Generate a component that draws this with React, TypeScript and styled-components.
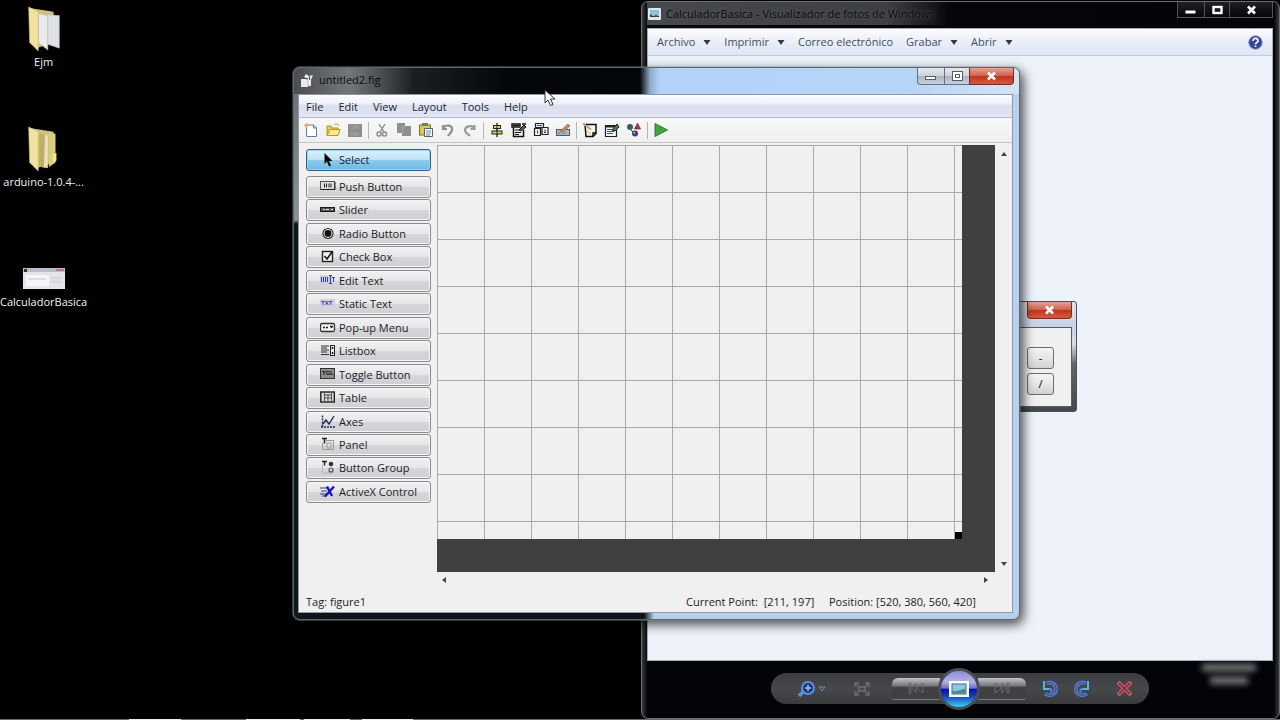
import React from 'react';
import styled, { createGlobalStyle, css } from 'styled-components';

const Global = createGlobalStyle`
  * { box-sizing: border-box; }
  html, body { margin: 0; background: #000; }
  body, button { font-family: "Open Sans", "Noto Sans", sans-serif; font-size: 11px; line-height: 16px; }
  button { border: 0; padding: 0; margin: 0; background: none; color: inherit; }
  svg { display: block; flex: none; }
`;

/* ---------- desktop ---------- */
const Desktop = styled.main`
  position: relative;
  min-height: 100vh;
  overflow: hidden;
  background: #000;
`;
const Shortcuts = styled.nav`
  display: grid;
  grid-auto-rows: 120px;
  width: 86px;
`;
const Shortcut = styled.a`
  display: flex;
  flex-direction: column;
  align-items: center;
  justify-content: flex-end;
  height: 70px;
  gap: 2px;
  color: #f2f2f2;
  text-decoration: none;
  white-space: nowrap;
`;
const Taskbar = styled.footer`
  position: absolute;
  left: 0;
  right: 0;
  bottom: 0;
  height: 1px;
  display: flex;
  gap: 4px;
  padding-left: 129px;
  background: #6a6a6a;
`;
const TaskItem = styled.span<{ $w: number; $gap?: number }>`
  width: ${p => p.$w}px;
  margin-left: ${p => p.$gap || 0}px;
  background: #eee;
`;

/* ---------- photo viewer ---------- */
const Viewer = styled.section`
  position: absolute;
  left: calc(50% + 1px);
  right: 0;
  top: 1px;
  bottom: 1px;
  display: flex;
  flex-direction: column;
  padding: 0 6px 0 5px;
  border: 1px solid #6d6f72;
  border-radius: 7px;
  background: linear-gradient(90deg, #3a3b3d 0, #08090c 5px, #030408 calc(100% - 5px), #3a3b3d 100%);
`;
const ViewerTitle = styled.header`
  display: flex;
  justify-content: space-between;
  align-items: flex-start;
  height: 26px;
  color: #08090b;
`;
const ViewerName = styled.h2`
  display: flex;
  align-items: center;
  gap: 5px;
  height: 23px;
  margin: 0;
  padding: 0 12px 0 1px;
  font-size: 11px;
  font-weight: 400;
  white-space: nowrap;
  background: linear-gradient(90deg, #47494c, #3d3f42 80%, #15171a 96%, transparent);
  text-shadow: 0 0 4px #66686b;
`;
const Caption = styled.div`
  display: flex;
  flex: none;
`;
const ViewerCaptionButton = styled.button<{ $w: number }>`
  width: ${p => p.$w}px;
  height: 16px;
  display: grid;
  place-items: center;
  border: 1px solid #54565a;
  border-top: 0;
  margin-left: -1px;
  background: linear-gradient(#1e2023, #050608);
`;
const ViewerClient = styled.div`
  flex: 1;
  display: flex;
  flex-direction: column;
  border: 1px solid #a9acb2;
  background: #eef2fb;
`;
const ViewerMenu = styled.nav`
  display: flex;
  align-items: center;
  gap: 13px;
  height: 27px;
  padding: 0 9px;
  color: #434d5e;
  border-bottom: 1px solid #c3ccda;
  background: linear-gradient(#fbfcfe, #e9eef8 50%, #dde6f2);
`;
const ViewerMenuItem = styled.button`
  display: flex;
  align-items: center;
  gap: 8px;
  white-space: nowrap;
`;
const Help = styled.button`
  margin-left: auto;
`;
const ControlArea = styled.div`
  display: flex;
  justify-content: center;
  align-items: center;
  height: 57px;
  padding-bottom: 2px;
  background: #030408;
`;
const ControlPill = styled.div`
  display: flex;
  align-items: center;
  width: 378px;
  height: 31px;
  padding-left: 22px;
  border-radius: 16px;
  background: linear-gradient(#3c3d40, #47484b 50%, #3a3b3d);
`;
const PillButton = styled.button<{ $w: number }>`
  flex: none;
  width: ${p => p.$w}px;
  height: 24px;
  display: grid;
  place-items: center;
`;
const RotateGroup = styled.div`
  display: flex;
  margin-left: 8px;
`;
const StepButton = styled.button<{ $side: 'l' | 'r' }>`
  flex: none;
  width: 48px;
  height: 22px;
  display: grid;
  place-items: center;
  border-bottom: 1px solid #77797c;
  border-radius: ${p => (p.$side === 'l' ? '6px 0 0 2px' : '0 6px 2px 0')};
  background: linear-gradient(#c4c5c8, #77797c 36%, #3f4043 46%, #3f4043);
`;
const Play = styled.button`
  flex: none;
  position: relative;
  width: 42px;
  height: 42px;
  margin: 0 -2px;
  display: grid;
  place-items: center;
  border-radius: 50%;
  border: 3px solid #4b4e58;
  background: linear-gradient(#8d8fd0, #b0b2e6 30%, #6a6fc4 48%, #0810a0 50%, #1638b8 68%, #35c0ea 96%);
`;
const Ghost = styled.div`
  position: absolute;
  right: 20px;
  bottom: 30px;
  width: 60px;
  height: 24px;
  display: flex;
  flex-direction: column;
  align-items: center;
  gap: 6px;
  filter: blur(3px);
`;
const GhostLine = styled.span<{ $w: number }>`
  width: ${p => p.$w}px;
  height: 7px;
  background: #7b7c80;
`;

/* ---------- calculator ---------- */
const Calculator = styled.section`
  position: absolute;
  left: calc(50% + 300px);
  top: 301px;
  width: 137px;
  height: 111px;
  padding: 0 4px 5px;
  border: 1px solid #4c4f55;
  border-radius: 3px;
  background: linear-gradient(#dfe3ea 0, #c7d2e6 26px, #d9dce2 42px, #62656b 62px, #43464b 100%);
`;
const CalcTitle = styled.header`
  display: flex;
  justify-content: flex-end;
  height: 25px;
`;
const CalcBody = styled.div`
  display: grid;
  justify-content: end;
  align-content: center;
  gap: 4px;
  height: 80px;
  padding: 8px 17px 0 0;
  border: 1px solid #5a5d62;
  background: #f0f0f0;
`;
const CalcKey = styled.button`
  width: 27px;
  height: 22px;
  border: 1px solid #6e6e6e;
  border-radius: 3px;
  background: linear-gradient(#f4f4f4, #e6e6e6 50%, #d2d2d2);
`;

/* ---------- figure editor ---------- */
const Editor = styled.section`
  position: absolute;
  left: calc(50% - 347px);
  right: calc(50% - 380px);
  top: 67px;
  padding: 0 6px 6px 4px;
  border: 1px solid #5c6673;
  border-radius: 7px;
  background:
    linear-gradient(90deg, transparent 6px, #101317 6px, #101317 350px, #b7cfea 360px) bottom / 100% 8px no-repeat,
    linear-gradient(#6a6c70, #8d8f92 152px, #141518 156px, #141518) left / 6px 100% no-repeat,
    #b9d1ee;
  box-shadow: 0 0 0 1px rgba(150, 155, 160, 0.35), 3px 4px 12px rgba(0, 0, 0, 0.75);
`;
const EditorTitle = styled.header`
  display: flex;
  justify-content: space-between;
  height: 26px;
  margin: 0 -6px 0 -4px;
  padding: 0 5px 0 6px;
  border-radius: 6px 6px 0 0;
  background: linear-gradient(90deg, #4a4c50 0, #74767a 55px, #55575b 80px, #1b1e23 120px, #060709 210px, #050608 346px, #8fabc9 356px, #b3d2f8 366px, #b7d5f8 620px, #d5e4f4 100%);
`;
const EditorName = styled.h1`
  display: flex;
  align-items: center;
  gap: 5px;
  height: 24px;
  margin: 0;
  font-size: 11px;
  font-weight: 400;
  color: #0b0c0e;
`;
const EditorCaptionButton = styled.button<{ $w: number; $red?: boolean }>`
  width: ${p => p.$w}px;
  height: 17px;
  display: grid;
  place-items: center;
  margin-left: -1px;
  border: 1px solid #68727e;
  border-top: 0;
  background: linear-gradient(#e4e9ee, #cdd4db 48%, #aab4bf 52%, #c6d2de);
  ${p => p.$red && css`
    border-color: #7d2a22;
    background: linear-gradient(#e3a396, #d4604c 48%, #bd3620 52%, #d9573c);
  `}
  &:first-child { border-bottom-left-radius: 4px; }
  &:last-child { border-bottom-right-radius: 4px; }
`;
const EditorClient = styled.div`
  border: 1px solid #8d97a5;
  background: #f0f0f0;
  color: #1c1c1c;
`;
const MenuBar = styled.nav`
  display: flex;
  align-items: center;
  gap: 15px;
  height: 23px;
  padding: 2px 7px 0;
  color: #1c2433;
  border-bottom: 1px solid #b6bccc;
  background: linear-gradient(#fdfdff, #eceff8 40%, #d9dfee 50%, #e2e7f4);
`;
const ToolBar = styled.div`
  display: flex;
  align-items: center;
  height: 25px;
  padding: 0 1px;
  border-bottom: 1px solid #c6c6c6;
  background: linear-gradient(#f8f8f8, #efefef);
`;
const Tool = styled.button`
  width: 22px;
  height: 22px;
  display: flex;
  align-items: center;
  justify-content: center;
  flex: none;
`;
const ToolRule = styled.span`
  width: 1px;
  height: 17px;
  margin: 0 2px;
  background: #b4b4b4;
`;
const Work = styled.div`
  display: grid;
  grid-template-columns: 125px 1fr 17px;
  padding: 2px 0 0 7px;
`;
const Palette = styled.aside`
  padding-top: 4px;
`;
const PaletteList = styled.div`
  display: flex;
  flex-direction: column;
  justify-content: space-between;
  height: 327px;
  margin-top: 5px;
`;
const PaletteButton = styled.button<{ $active?: boolean }>`
  display: flex;
  align-items: center;
  gap: 3px;
  width: 100%;
  height: 22px;
  padding: 0 0 0 13px;
  border: 1px solid #8b8b8f;
  border-radius: 3px;
  box-shadow: inset 0 0 0 1px #f6f6f6;
  background: linear-gradient(#f1f1f2, #e6e6e8 50%, #d6d6da 52%, #cfcfd4);
  white-space: nowrap;
  ${p => p.$active && css`
    border-color: #2c628b;
    box-shadow: inset 0 0 0 1px #9fd0ec;
    background: linear-gradient(#dff1fb, #bfe2f6 48%, #8ccbee 52%, #6fb9e4);
  `}
`;
const Stage = styled.div`
  margin-left: 6px;
  height: 427px;
  padding: 0 33px 33px 0;
  background: #404040;
`;
const Figure = styled.div`
  position: relative;
  height: 100%;
  background:
    repeating-linear-gradient(90deg, #a9a9ac 0 1px, transparent 1px 47px),
    repeating-linear-gradient(#a9a9ac 0 1px, transparent 1px 47px),
    #f0f0f1;
`;
const Grip = styled.span`
  position: absolute;
  right: 0;
  bottom: 0;
  width: 7px;
  height: 7px;
  background: #000;
`;
const ScrollV = styled.div`
  display: flex;
  flex-direction: column;
  align-items: center;
  justify-content: space-between;
  padding: 7px 0 6px;
`;
const ScrollH = styled.div`
  display: flex;
  justify-content: space-between;
  padding: 5px 24px 0 143px;
  height: 18px;
`;
const Status = styled.footer`
  display: grid;
  grid-template-columns: 1fr 143px 183px;
  padding: 4px 0 2px 7px;
  white-space: pre;
`;
const Pointer = styled.svg`
  position: absolute;
  left: calc(50% - 96px);
  top: 89px;
`;

/* ---------- drawings ---------- */
const Down = () => (
  <svg width="8" height="5" viewBox="0 0 8 5"><path d="M.5 0h7L4 5z" fill="#333b49" /></svg>
);
const Folder = ({ docs }: { docs?: boolean }) => (
  <svg width="36" height="46" viewBox="0 0 36 48">
    <path d="M3 2l25 4v32L10 44z" fill="#cfc07a" />
    {docs ? (
      <g>
        <path d="M12 8l10 2v36l-10-8z" fill="#e9ebee" stroke="#b9bcc0" strokeWidth=".6" />
        <path d="M22 9l12 1v34l-12-4z" fill="#dfe2e5" stroke="#b9bcc0" strokeWidth=".6" />
      </g>
    ) : (
      <g>
        <path d="M13 8l6 1v35l-6-2z" fill="#c2ad62" />
        <path d="M19 9l3 1v34l-4-1z" fill="#eadfc4" />
        <path d="M23 7l7 1v30l-7 5z" fill="#dccb7c" />
        <path d="M27 30l4-2v8l-4 3z" fill="#f1e48f" />
      </g>
    )}
    <path d="M2 1l10 5v41L3 38z" fill="#f0e3a0" stroke="#c9b873" strokeWidth=".6" />
  </svg>
);
const Thumb = () => (
  <svg width="42" height="24" viewBox="0 0 42 24">
    <rect width="42" height="21" fill="#e4e5ea" /><rect width="42" height="4" fill="#b9bccd" />
    <rect x="1" y="1" width="3" height="3" fill="#333" /><rect x="33" y="1" width="8" height="2" fill="#b5807e" />
    <rect x="3" y="7" width="23" height="11" fill="#f5f5f7" /><path d="M28 10h11M28 14h11M5 11h18" stroke="#c5c6cb" />
  </svg>
);
const MinGlyph = ({ dark }: { dark?: boolean }) => (
  <svg width="12" height="10" viewBox="0 0 12 10"><rect x=".5" y="5.5" width="10" height="3" fill="#fff" stroke={dark ? '#555f6b' : '#fff'} strokeWidth={dark ? 1 : 0} /></svg>
);
const MaxGlyph = ({ dark }: { dark?: boolean }) => (
  <svg width="11" height="10" viewBox="0 0 11 10">
    {dark && <rect x=".5" y=".5" width="10" height="9" fill="#fff" stroke="#555f6b" />}
    <rect x={dark ? 3.5 : 1.5} y={dark ? 3.5 : 2} width={dark ? 4 : 8} height={dark ? 3 : 6} fill="none" stroke={dark ? '#555f6b' : '#fff'} strokeWidth={dark ? 1 : 2.4} />
  </svg>
);
const CloseGlyph = () => (
  <svg width="11" height="10" viewBox="0 0 11 10"><path d="M2 1.5l7 7M9 1.5l-7 7" stroke="#fff" strokeWidth="2.6" /></svg>
);
const GuideIcon = () => (
  <svg width="14" height="15" viewBox="0 0 14 15">
    <path d="M1 6h7v8H1z" fill="#e9e9e9" /><path d="M4 4l2-3 3 2 4-1-2 5v6H8V7z" fill="#f8f8f8" stroke="#888" strokeWidth=".5" />
    <path d="M5 5l3 1M9 3l1 4" stroke="#333" />
  </svg>
);
const ViewerIcon = () => (
  <svg width="13" height="12" viewBox="0 0 13 12"><rect width="13" height="12" rx="1" fill="#dce8ee" /><rect x="2" y="2" width="9" height="5" fill="#8ec3dc" /><path d="M2 9V6l3 2 3-1 3 1v1z" fill="#263f4d" /></svg>
);
const svg16 = (children: React.ReactNode) => <svg width="16" height="16" viewBox="0 0 16 16" fill="none">{children}</svg>;

const tools: ([string, React.ReactNode] | null)[] = [
  ['New', svg16(<><path d="M3.500 3h7l3 3v8.500H3.500z" fill="#fff" stroke="#5f7fa5" /><path d="M10.500 3v3h3" stroke="#5f7fa5" /><path d="M1 3.500h5M3.500 1v5" stroke="#e0a85a" strokeWidth="1.500" /></>)],
  ['Open', svg16(<><path d="M2 13V4h4l1 2h6v7z" fill="#e5c94c" stroke="#b69425" /><path d="M2 13.500l3-6h10l-2 6z" fill="#f9eb86" stroke="#b69425" /><path d="M9 3c2-2 4-1 5 1" stroke="#b69425" /></>)],
  ['Save', svg16(<><rect x="1" y="2" width="14" height="13" fill="#8e8e8e" /><path d="M4 3h8v4H4zM4 10h8v4H4z" fill="#989898" /></>)],
  null,
  ['Cut', svg16(<><path d="M5 2l5 8M11 2L6 10" stroke="#8c8c8c" strokeWidth="1.400" /><circle cx="5" cy="12" r="2" stroke="#8c8c8c" strokeWidth="1.500" /><circle cx="10.500" cy="12" r="2" stroke="#8c8c8c" strokeWidth="1.500" /></>)],
  ['Copy', svg16(<><path d="M1 1h8v3h6v10H6v-3H1z" fill="#8f8f8f" /><path d="M6.500 11V4.500H9" stroke="#a5a5a5" /></>)],
  ['Paste', svg16(<><rect x="1.500" y="3" width="11" height="10" fill="#d6cd52" stroke="#77722c" /><rect x="4" y="1" width="6" height="3" fill="#777" /><path d="M6.500 6.500h8v8h-8z" fill="#f5f7fb" stroke="#55627a" /><path d="M8 9h5M8 11h5M8 13h4" stroke="#7c8caa" /></>)],
  ['Undo', svg16(<path d="M3 6c3-4 10-3 9 2-.5 3-3 4-4 6M3 3v4h4" stroke="#8e8e8e" strokeWidth="2.200" />)],
  ['Redo', svg16(<path d="M12 6C10 3 3 4 3 8c0 3 3 4 5 6M12.500 3v4h-4" stroke="#9a9a9a" strokeWidth="2.200" />)],
  null,
  ['Align Objects', svg16(<><path d="M8 1v14" stroke="#222" strokeWidth="1.300" /><rect x="4.500" y="3.500" width="7" height="3" fill="#e8e04b" stroke="#222" /><rect x="3" y="9" width="10" height="3" fill="#d6d03e" stroke="#222" /><path d="M8 3v10" stroke="#222" /></>)],
  ['Menu Editor', svg16(<><path d="M1 2h8v3H1zM2.500 5v9.500h10V8" fill="#f2f2f2" stroke="#111" strokeWidth="1.500" /><path d="M4 8h5M4 10.500h6M4 12.500h4M2 3.500h6" stroke="#111" /><path d="M8 8l5-5 2 2-5 4z" fill="#5c6245" stroke="#111" /><path d="M11 2h4" stroke="#111" strokeWidth="1.500" /></>)],
  ['Tab Order Editor', svg16(<><path d="M2.500 1.500h8v4h-8zM1.500 6.500h6v7h-6zM9 5.500h6v7H9z" fill="#eef0f5" stroke="#222" strokeWidth="1.200" /><path d="M4 3.500h5M4.500 8.500v3M12 7.500v3M11 10.500h2" stroke="#30416e" /></>)],
  ['Toolbar Editor', svg16(<><rect x="1.500" y="7.500" width="13" height="6" fill="#a8b7c2" stroke="#4e5a63" /><path d="M3 11h9" stroke="#5b7488" strokeDasharray="2 1" /><path d="M5 9l8-7 2 2-7 6z" fill="#c08b62" stroke="#8a5d3c" strokeWidth=".6" /></>)],
  null,
  ['M-file Editor', svg16(<><path d="M3 2.500h11v9l-3 3H4z" fill="#f7f4ee" stroke="#111" strokeWidth="1.500" /><path d="M14 11h-3v3" stroke="#111" strokeWidth="1.500" /><path d="M1 1.500l8 6" stroke="#d19a72" strokeWidth="2" /><path d="M5 9l4 3" stroke="#b9b1a4" /></>)],
  ['Property Inspector', svg16(<><path d="M1.500 3.500h11v11h-11z" fill="#f6f7fb" stroke="#222" strokeWidth="1.200" /><path d="M1 4.500h10" stroke="#222" strokeWidth="2" /><path d="M3 7.500h5M3 9.500h7M3 11.500h6" stroke="#3b4f9a" /><path d="M8 8l5-6 2 3-4 4z" fill="#64763c" stroke="#222" /></>)],
  ['Object Browser', svg16(<><circle cx="4" cy="5" r="3" fill="#2d6358" /><path d="M11.500 1l3 6h-6z" fill="#a3384a" stroke="#5e2030" strokeWidth=".6" /><circle cx="9" cy="11.500" r="3" fill="#38406f" /><circle cx="8.300" cy="10.800" r="1" fill="#b9c0e4" /><path d="M5 8l2 2" stroke="#333" /></>)],
  null,
  ['Run', svg16(<path d="M2 1.500L14.500 8 2 14.500z" fill="#3fa53c" stroke="#2f7f2d" />)],
];

const Tiny = styled.text`
  font-family: "Liberation Sans", sans-serif;
  font-size: 6px;
  font-weight: 700;
`;
const palette: [string, React.ReactNode][] = [
  ['Push Button', svg16(<><rect x=".5" y="2.500" width="14" height="8" fill="#dedede" stroke="#555" /><path d="M1 10.500h14V3" stroke="#222" /><path d="M4.500 4.500v4M6.500 4.500v4M9 4.500v4M11 4.500v4" stroke="#222" /></>)],
  ['Slider', svg16(<><rect x=".5" y="5.500" width="14" height="4" fill="#555" stroke="#1b1b1b" /><path d="M3 7.500h2M6 7.500h3M11 7.500h2" stroke="#ddd" /></>)],
  ['Radio Button', svg16(<><circle cx="8" cy="7.500" r="5" fill="#e8e8e8" stroke="#333" strokeWidth="1.200" /><circle cx="8" cy="7.500" r="3.400" fill="#111" /></>)],
  ['Check Box', svg16(<><rect x="2.500" y="2.500" width="10" height="10" fill="#f4f4f4" stroke="#222" strokeWidth="1.400" /><path d="M4.500 7l2.500 3 5-7" stroke="#111" strokeWidth="1.600" /></>)],
  ['Edit Text', svg16(<><rect y="2.500" width="12" height="8" fill="#c9cbe4" /><path d="M1.500 4v5M3.500 4v5M5.500 4v5M7.500 4v5M10.500 2v9M9 2.500h3M9 10.500h3M13.500 4v5M12 4.500h3" stroke="#3d3f92" /></>)],
  ['Static Text', svg16(<><rect y="3" width="15" height="8" fill="#cfd0e8" /><Tiny x="1" y="9" fill="#3a36a0">TXT</Tiny></>)],
  ['Pop-up Menu', svg16(<><rect x=".5" y="3.500" width="14" height="8" rx="1.500" fill="#f0f0f0" stroke="#333" strokeWidth="1.300" /><path d="M3 7.500h2M6 7.500h2M10 6.500h3M11.500 6v2" stroke="#222" strokeWidth="1.400" /></>)],
  ['Listbox', svg16(<><rect x="10.500" y="2.500" width="4" height="10" fill="#eee" stroke="#222" /><path d="M12.500 4v2M12.500 9v2" stroke="#111" strokeWidth="1.500" /><path d="M1 3h8M1 5h6M1 7h8M1 9h6M1 11.500h8" stroke="#333" strokeWidth="1.200" /></>)],
  ['Toggle Button', svg16(<><rect x=".5" y="1.500" width="14" height="10" fill="#8c8c8c" stroke="#333" /><Tiny x="2" y="8" fill="#111">TGL</Tiny></>)],
  ['Table', svg16(<><rect x=".8" y="2" width="13.500" height="10" fill="#d8dade" stroke="#222" strokeWidth="1.400" /><path d="M4.500 2v10M8 4v7M11.500 2v10M4.500 5h7M4.500 8h7" stroke="#555" /></>)],
  ['Axes', svg16(<><path d="M2.500 1.500v12M1 13h14" stroke="#262a66" strokeWidth="1.500" strokeDasharray="2 1" /><path d="M3 10l3-4 3 4 5-8" stroke="#23284f" strokeWidth="1.400" /></>)],
  ['Panel', svg16(<><path d="M6 3.500h7.500v9h-11V6" stroke="#999" /><path d="M2 1.500h5M4.500 1.500v5" stroke="#222" strokeWidth="1.500" /><rect x="7" y="6" width="4" height="5" stroke="#8aa39a" /></>)],
  ['Button Group', svg16(<><path d="M2.500 5v8h11" stroke="#999" strokeDasharray="1 1" /><path d="M2 1.500h5M4.500 1.500v4" stroke="#222" strokeWidth="1.500" /><circle cx="11" cy="4" r="2.300" fill="#333" /><circle cx="11" cy="10" r="2" stroke="#555" strokeWidth="1.200" /></>)],
  ['ActiveX Control', svg16(<><path d="M0 4h7M1 7h6M0 10h6M2 12h4" stroke="#333a80" strokeWidth="1.200" /><path d="M7 2.500l5 9.500M14 2.500L5 12.500" stroke="#1414c4" strokeWidth="2.400" /></>)],
];

const viewerMenu: [string, boolean][] = [['Archivo', true], ['Imprimir', true], ['Correo electrónico', false], ['Grabar', true], ['Abrir', true]];

export default function App() {
  return (
    <Desktop>
      <Global />
      <Shortcuts>
        <Shortcut href="#ejm"><Folder docs />Ejm</Shortcut>
        <Shortcut href="#arduino"><Folder />arduino-1.0.4-...</Shortcut>
        <Shortcut href="#calculador"><Thumb />CalculadorBasica</Shortcut>
      </Shortcuts>

      <Viewer>
        <ViewerTitle>
          <ViewerName><ViewerIcon />CalculadorBasica - Visualizador de fotos de Windows</ViewerName>
          <Caption>
            <ViewerCaptionButton $w={28} aria-label="Minimizar"><MinGlyph /></ViewerCaptionButton>
            <ViewerCaptionButton $w={26} aria-label="Maximizar"><MaxGlyph /></ViewerCaptionButton>
            <ViewerCaptionButton $w={44} aria-label="Cerrar"><CloseGlyph /></ViewerCaptionButton>
          </Caption>
        </ViewerTitle>
        <ViewerClient>
          <ViewerMenu>
            {viewerMenu.map(([label, arrow]) => (
              <ViewerMenuItem key={label}>{label}{arrow && <Down />}</ViewerMenuItem>
            ))}
            <Help aria-label="Ayuda">
              <svg width="15" height="15" viewBox="0 0 15 15">
                <circle cx="7.500" cy="7.500" r="6.800" fill="#34459b" stroke="#8f9cc9" />
                <path d="M5 6c0-4 5.500-3 5 0-.3 1.500-2.500 1.500-2.500 3.300M7.500 10.500v1.500" fill="none" stroke="#fff" strokeWidth="1.700" />
              </svg>
            </Help>
          </ViewerMenu>
        </ViewerClient>
        <ControlArea>
          <ControlPill>
            <PillButton $w={38} aria-label="Zoom">
              <svg width="30" height="18" viewBox="0 0 30 18" fill="none">
                <path d="M2 16l5-5" stroke="#5a8fe8" strokeWidth="3.500" /><circle cx="11" cy="8" r="6" fill="#22386e" stroke="#5a8fe8" strokeWidth="2" />
                <path d="M8 8h6M11 5v6" stroke="#9ec4ff" strokeWidth="1.500" /><path d="M22 7h6l-3 4z" stroke="#7d8bab" />
              </svg>
            </PillButton>
            <PillButton $w={61} aria-label="Tamaño real">
              <svg width="18" height="16" viewBox="0 0 18 16" fill="none" stroke="#696b6f" strokeWidth="1.500">
                <path d="M2 6V2h4M12 2h4v4M2 10v4h4M12 14h4v-4M2 2l5 5M16 2l-5 5M2 14l5-5M16 14l-5-5" /><rect x="6" y="6" width="6" height="4" />
              </svg>
            </PillButton>
            <StepButton $side="l" aria-label="Anterior">
              <svg width="18" height="14" viewBox="0 0 18 14" fill="none" stroke="#66686c"><path d="M2 2v10h2V2zM16 2v10l-7-5zM9 2v10L5 7z" /></svg>
            </StepButton>
            <Play aria-label="Presentación">
              <svg width="20" height="16" viewBox="0 0 20 16">
                <rect x=".5" y=".5" width="19" height="15" fill="#f6f8fb" stroke="#fff" /><rect x="3" y="3" width="14" height="10" fill="#8cc8e4" stroke="#4b6a7c" />
                <path d="M3.500 12.500v-3c5 2 8-1 13-2v5z" fill="#4d8a86" />
              </svg>
            </Play>
            <StepButton $side="r" aria-label="Siguiente">
              <svg width="18" height="14" viewBox="0 0 18 14" fill="none" stroke="#66686c"><path d="M16 2v10h-2V2zM2 2v10l7-5zM9 2v10l4-5z" /></svg>
            </StepButton>
            <RotateGroup>
              <PillButton $w={32} aria-label="Girar a la izquierda">
                <svg width="16" height="18" viewBox="0 0 16 18" fill="none">
                  <path d="M4 3.500c5-2.500 10 .5 10 5.500 0 6-7 8-11 4.500" stroke="#5b7fd2" strokeWidth="3.600" />
                  <path d="M4 3.500c5-2.500 10 .5 10 5.500 0 6-7 8-11 4.500" stroke="#27408c" strokeWidth="1" />
                  <path d="M2 1v8h7" stroke="#59b4dc" strokeWidth="2" /><path d="M7 9c3-1 4 2 1 3" stroke="#5b7fd2" strokeWidth="1.500" />
                </svg>
              </PillButton>
              <PillButton $w={32} aria-label="Girar a la derecha">
                <svg width="16" height="18" viewBox="0 0 16 18" fill="none">
                  <path d="M12 3.500C7 1 2 4 2 9c0 6 7 8 11 4.500" stroke="#5b7fd2" strokeWidth="3.600" />
                  <path d="M12 3.500C7 1 2 4 2 9c0 6 7 8 11 4.500" stroke="#27408c" strokeWidth="1" />
                  <path d="M14 1v8H7" stroke="#59b4dc" strokeWidth="2" /><path d="M9 9c-3-1-4 2-1 3" stroke="#5b7fd2" strokeWidth="1.500" />
                </svg>
              </PillButton>
            </RotateGroup>
            <PillButton $w={52} aria-label="Eliminar">
              <svg width="17" height="15" viewBox="0 0 17 15" fill="none">
                <path d="M2 1l13 13M15 1L2 14" stroke="#d95866" strokeWidth="4" /><path d="M3 2l11 11M14 2L3 13" stroke="#6b3039" strokeWidth="1.500" />
              </svg>
            </PillButton>
          </ControlPill>
        </ControlArea>
        <Ghost><GhostLine $w={54} /><GhostLine $w={38} /></Ghost>
      </Viewer>

      <Calculator>
        <CalcTitle><Caption><EditorCaptionButton $w={45} $red aria-label="Cerrar"><CloseGlyph /></EditorCaptionButton></Caption></CalcTitle>
        <CalcBody><CalcKey>-</CalcKey><CalcKey>/</CalcKey></CalcBody>
      </Calculator>

      <Editor>
        <EditorTitle>
          <EditorName><GuideIcon />untitled2.fig</EditorName>
          <Caption>
            <EditorCaptionButton $w={28} aria-label="Minimize"><MinGlyph dark /></EditorCaptionButton>
            <EditorCaptionButton $w={26} aria-label="Maximize"><MaxGlyph dark /></EditorCaptionButton>
            <EditorCaptionButton $w={45} $red aria-label="Close"><CloseGlyph /></EditorCaptionButton>
          </Caption>
        </EditorTitle>
        <EditorClient>
          <MenuBar>
            {['File', 'Edit', 'View', 'Layout', 'Tools', 'Help'].map(m => <button key={m}>{m}</button>)}
          </MenuBar>
          <ToolBar>
            {tools.map((t, i) => (t ? <Tool key={i} aria-label={t[0]}>{t[1]}</Tool> : <ToolRule key={i} />))}
          </ToolBar>
          <Work>
            <Palette>
              <PaletteButton $active>
                {svg16(<path d="M4.500 1v11l2.500-2.500 2 5 2-1-2-4.500h3.500z" fill="#0b0b0b" />)}
                Select
              </PaletteButton>
              <PaletteList>
                {palette.map(([label, icon]) => <PaletteButton key={label}>{icon}{label}</PaletteButton>)}
              </PaletteList>
            </Palette>
            <Stage><Figure><Grip /></Figure></Stage>
            <ScrollV>
              <svg width="6" height="4" viewBox="0 0 6 4"><path d="M0 4l3-4 3 4z" fill="#444" /></svg>
              <svg width="6" height="4" viewBox="0 0 6 4"><path d="M0 0l3 4 3-4z" fill="#444" /></svg>
            </ScrollV>
          </Work>
          <ScrollH>
            <svg width="4" height="6" viewBox="0 0 4 6"><path d="M4 0L0 3l4 3z" fill="#444" /></svg>
            <svg width="4" height="6" viewBox="0 0 4 6"><path d="M0 0l4 3-4 3z" fill="#444" /></svg>
          </ScrollH>
          <Status>
            <span>Tag: figure1</span>
            <span>Current Point:  [211, 197]</span>
            <span>Position: [520, 380, 560, 420]</span>
          </Status>
        </EditorClient>
      </Editor>

      <Pointer width="12" height="18" viewBox="0 0 12 18"><path d="M1 1v13l3-3 2.500 5.500 2.500-1L6.500 10H11z" fill="#fff" stroke="#333" /></Pointer>
      <Taskbar><TaskItem $w={52} /><TaskItem $w={54} $gap={61} /><TaskItem $w={46} /><TaskItem $w={51} $gap={8} /></Taskbar>
    </Desktop>
  );
}
